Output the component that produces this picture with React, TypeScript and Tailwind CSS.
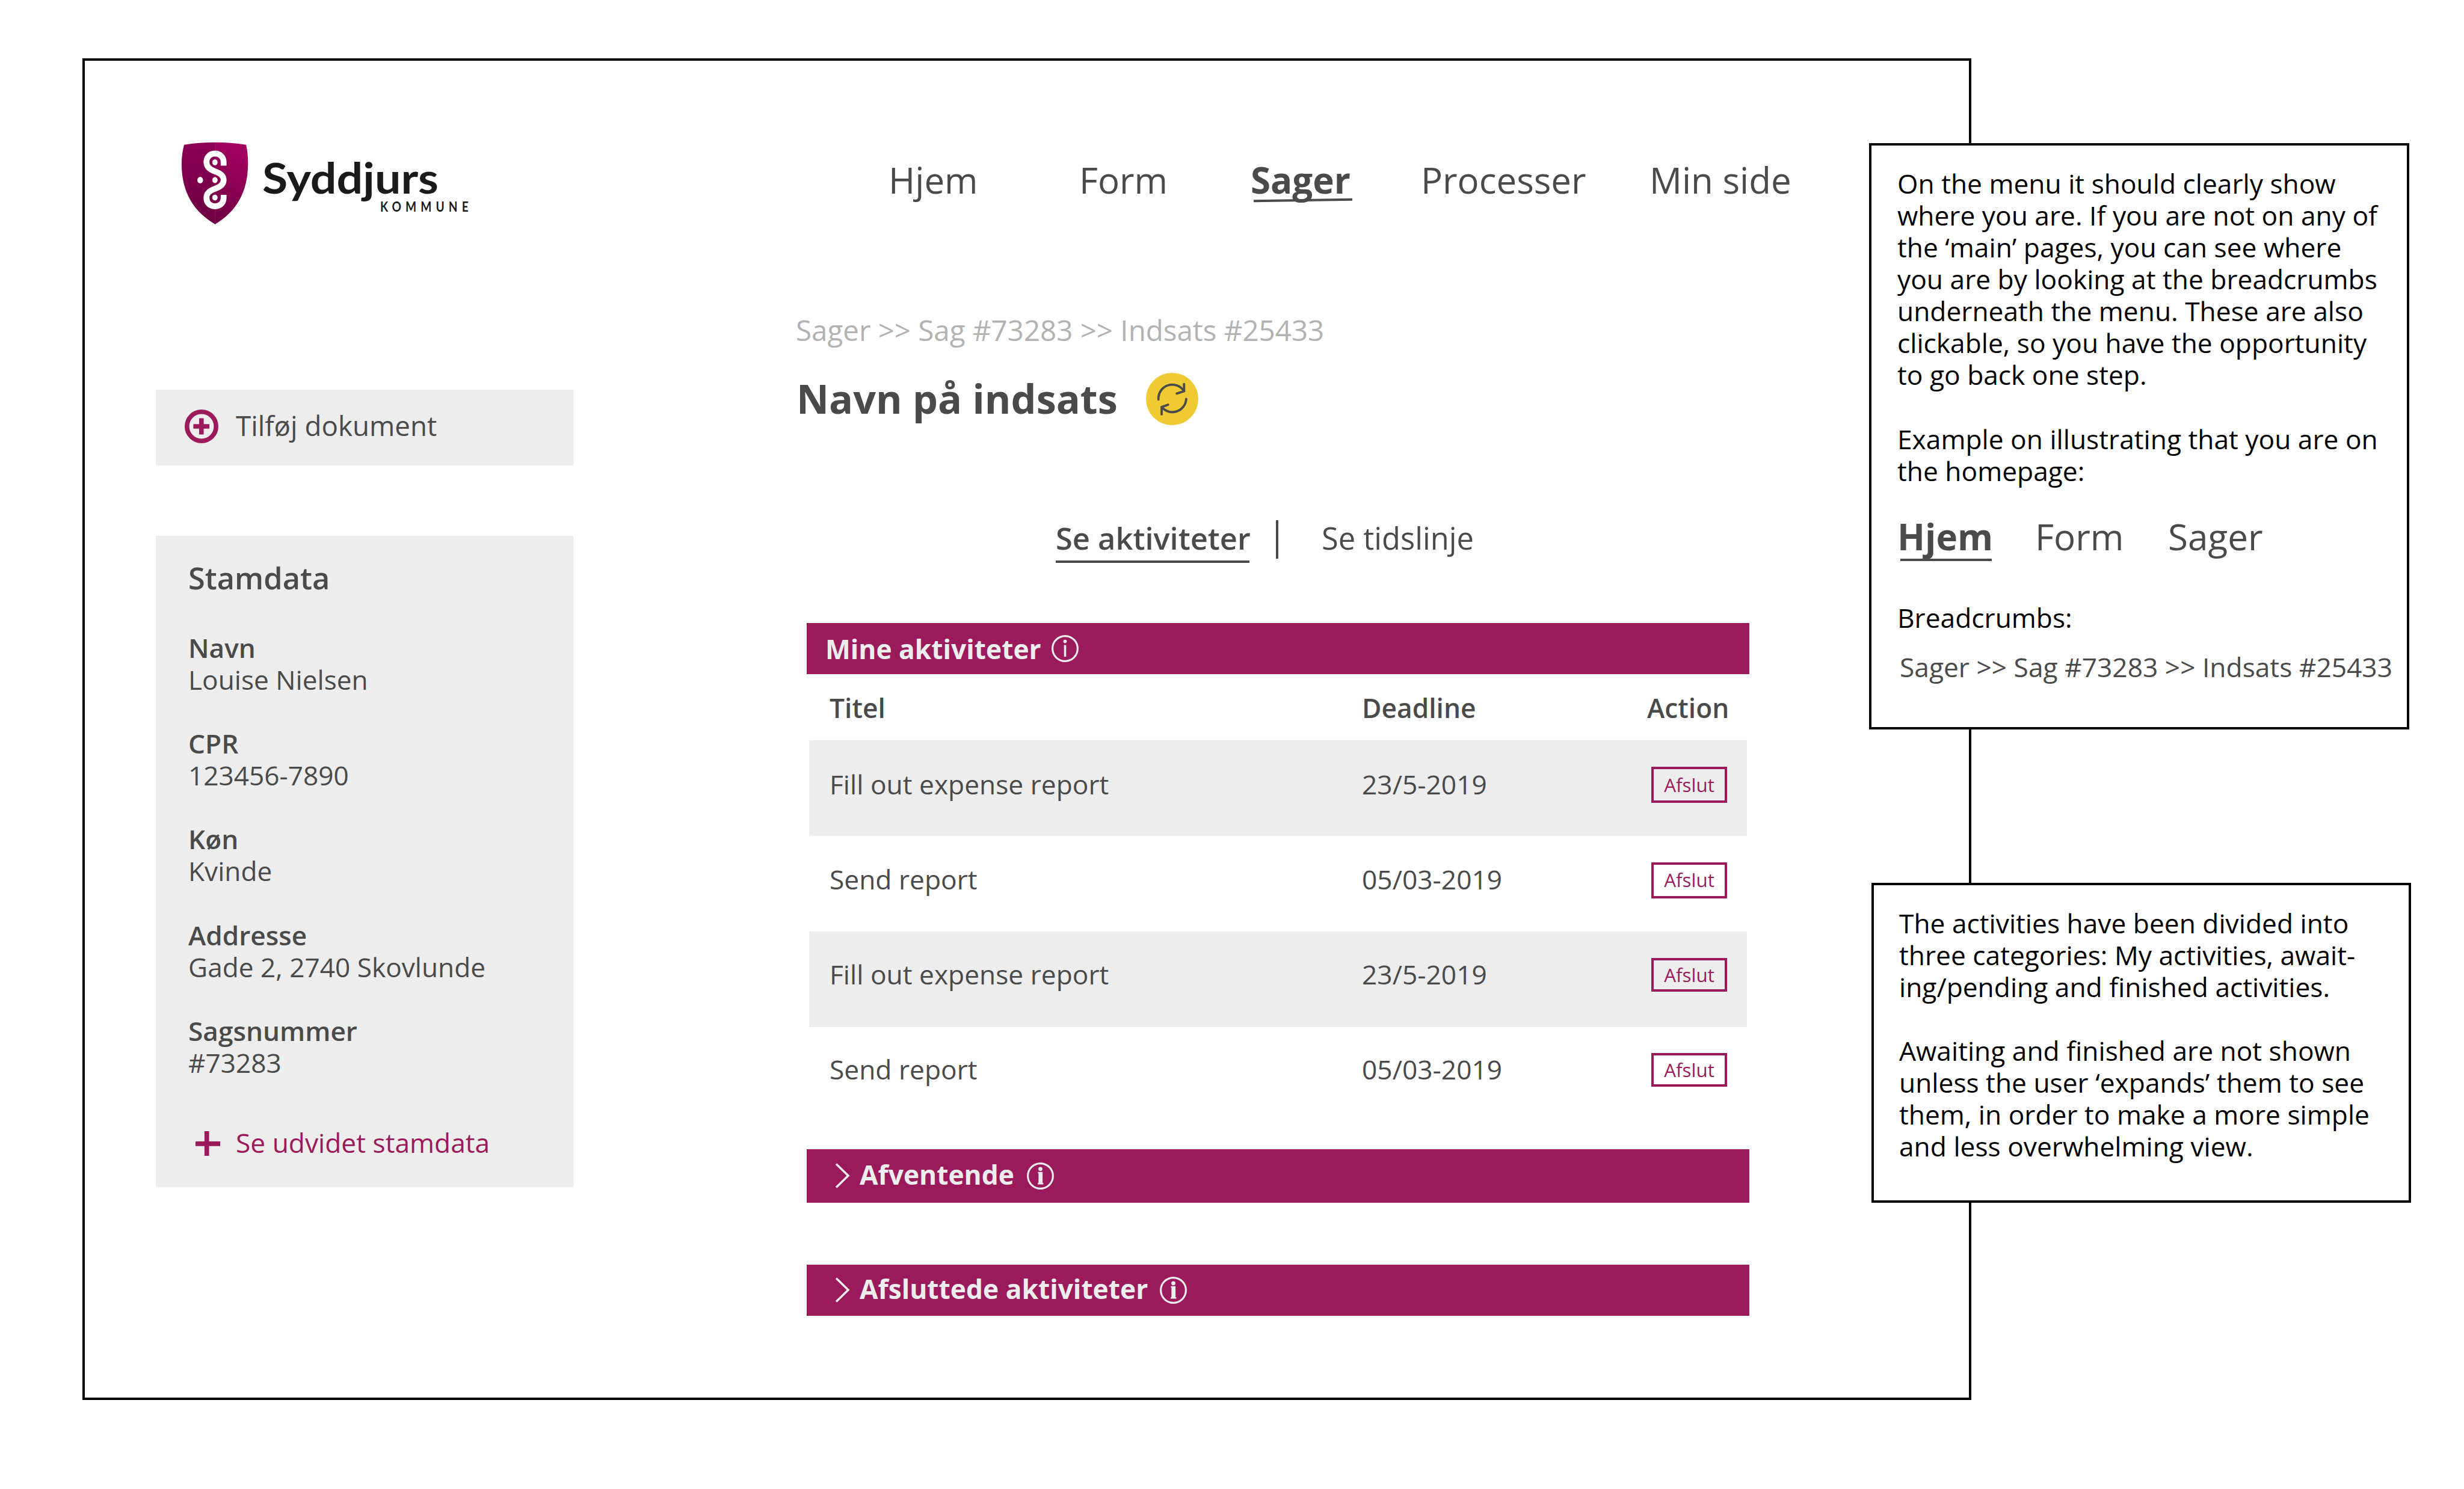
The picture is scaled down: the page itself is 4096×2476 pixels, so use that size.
import React from "react";

const stamdata = [
  { label: "Navn", value: "Louise Nielsen" },
  { label: "CPR", value: "123456-7890" },
  { label: "Køn", value: "Kvinde" },
  { label: "Addresse", value: "Gade 2, 2740 Skovlunde" },
  { label: "Sagsnummer", value: "#73283" },
];

const activities = [
  { title: "Fill out expense report", deadline: "23/5-2019", row: "bg-[#ededed]", text: "mt-[43px]", button: "mt-[44px] h-[60px]" },
  { title: "Send report", deadline: "05/03-2019", row: "", text: "mt-[42px]", button: "mt-[44px] h-[60px]" },
  { title: "Fill out expense report", deadline: "23/5-2019", row: "bg-[#ededed]", text: "mt-[41px]", button: "mt-[44px] h-[56px]" },
  { title: "Send report", deadline: "05/03-2019", row: "", text: "mt-[40px]", button: "mt-[43px] h-[56px]" },
];

function Logo() {
  return (
    <svg className="h-[138px] w-[479px] shrink-0" viewBox="340 266 540 156" role="img" aria-label="Syddjurs Kommune">
      <defs>
        <linearGradient id="shieldLeft" x1="0" y1="0" x2="0" y2="1">
          <stop offset="0" stopColor="#8c0055" />
          <stop offset="1" stopColor="#6c0040" />
        </linearGradient>
        <linearGradient id="shieldRight" x1="0.3" y1="0" x2="0.1" y2="1">
          <stop offset="0" stopColor="#a30060" />
          <stop offset="1" stopColor="#6e0042" />
        </linearGradient>
      </defs>
      <path fill="url(#shieldLeft)" d="M403.5 266.8 Q372 266.8 345 271.5 Q340 290 340.3 309 Q341 385 403.5 420.8 Z" />
      <path fill="url(#shieldRight)" d="M403 266.8 Q434 266.8 461.5 271.5 Q465.500 290 465 309 Q464 385 403 420.8 Z" />
      <path
        fill="none"
        stroke="#fff"
        strokeWidth="11"
        d="M419.200 310.700 V304 C419.200 294 412 288 403 288 C394 288 387 294 387 304 C387 313 393 318 403 321.500 C413 325 419.200 329 419.200 337.700 C419.200 346 413 350.500 403 354 C393 357.500 387 362 387 371 C387 381 394 387 403 387 C412 387 419.200 381 419.200 371 V365.500"
      />
      <g fill="#fff">
        <ellipse cx="402.900" cy="304.300" rx="5" ry="5.600" />
        <ellipse cx="375.200" cy="337.700" rx="5.400" ry="6" />
        <ellipse cx="402.900" cy="337.700" rx="5" ry="5.600" />
        <ellipse cx="402.900" cy="370.700" rx="5" ry="5.600" />
      </g>
      <g fill="#1a1a1a" style={{ fontFamily: "Lato, sans-serif" }}>
        <text x="492" y="363" fontSize="80" fontWeight="700" textLength="331" lengthAdjust="spacingAndGlyphs">Syddjurs</text>
        <text transform="translate(713.5 397.5) scale(0.85 1)" fontSize="25.500" fontWeight="700" textLength="195" lengthAdjust="spacing">KOMMUNE</text>
      </g>
    </svg>
  );
}

function InfoIcon({ bold = false }: { bold?: boolean }) {
  return (
    <svg className="h-[45px] w-[45px] shrink-0" viewBox="0 0 50 50" fill="none" stroke="#ededed">
      <circle cx="25" cy="25" r="23.200" strokeWidth="3.500" />
      {bold ? (
        <g fill="#ededed" stroke="none">
          <circle cx="25" cy="12" r="3.800" />
          <path d="M20.500 17.500 H29 V38 H30.500 V40.500 H20 V38 H21.500 V20 H20.500 Z" />
        </g>
      ) : (
        <g>
          <circle cx="25" cy="11.800" r="3.200" fill="#ededed" stroke="none" />
          <path d="M25 18.500 V40" strokeWidth="4" />
        </g>
      )}
    </svg>
  );
}

function RefreshBadge() {
  return (
    <svg className="mt-[3px] h-[87px] w-[87px]" viewBox="204 30 294 294">
      <circle cx="351" cy="177" r="147" fill="#efca33" />
      <g fill="none" stroke="#4a4a4a" strokeWidth="13" strokeLinecap="round" strokeLinejoin="round">
        <path d="M274 180 A78 78 0 0 1 418 133" />
        <path d="M418 93 V133 L377 146" />
        <path d="M430 177 A78 78 0 0 1 292 222" />
        <path d="M292 263 V222 L328 209" />
      </g>
    </svg>
  );
}

function CollapsedBar({ title, className, titleClass }: { title: string; className: string; titleClass: string }) {
  return (
    <button className={`ml-[18px] flex w-[1567px] items-center bg-[#9b1a5c] text-left text-[#ededed] ${className}`}>
      <svg className="ml-[47px] h-[42px] w-[25px]" viewBox="0 0 25 42" fill="none" stroke="#ededed" strokeWidth="3.500">
        <path d="M2 1.500 L22 21 L2 40.500" />
      </svg>
      <span className={`-mt-[4px] ml-[16px] text-[44.300px] leading-[60px] font-bold ${titleClass}`}>{title}</span>
      <InfoIcon bold />
    </button>
  );
}

export default function App() {
  return (
    <div className="relative flex h-[2476px] w-[4096px] overflow-hidden bg-white text-[#4a4a4a]" style={{ fontFamily: '"Open Sans", sans-serif' }}>
      <div className="mt-[97px] ml-[137px] h-[2231px] w-[3140px] border-4 border-black">
        <header className="flex h-[300px] items-start">
          <div className="mt-[135px] ml-[160px]">
            <Logo />
          </div>
          <nav className="mt-[158px] ml-[697px] grid grid-cols-[317px_285px_283px_380px_auto] text-[60px] leading-[80px] whitespace-nowrap">
            <a>Hjem</a>
            <a>Form</a>
            <a className="relative font-bold">
              Sager
              <span className="absolute top-[72px] left-[5px] h-[4px] w-[164px] -rotate-[0.8deg] bg-[#4a4a4a]" />
            </a>
            <a>Processer</a>
            <a>Min side</a>
          </nav>
        </header>

        <div className="flex items-start">
          <aside className="mt-[247px] ml-[118px] w-[694px]">
            <button className="flex h-[126px] w-full items-center bg-[#ededed]">
              <svg className="-mt-[4px] ml-[48px] h-[56px] w-[56px]" viewBox="0 0 62 62" fill="none" stroke="#9b1a5c" strokeWidth="8.400">
                <circle cx="31" cy="31" r="26.800" />
                <path d="M16 31 H45.500 M30.800 16 V46" />
              </svg>
              <span className="-mt-[8px] ml-[29px] text-[45.700px] leading-[60px]">Tilføj dokument</span>
            </button>

            <section className="mt-[117px] h-[1083px] bg-[#ededed] pt-[40px] pl-[54px]">
              <h2 className="text-[50.500px] leading-[60px] font-semibold">Stamdata</h2>
              <dl className="mt-[60px] flex flex-col gap-[53.070px] text-[44.200px] leading-[53.070px]">
                {stamdata.map((item) => (
                  <div key={item.label}>
                    <dt className="font-semibold">{item.label}</dt>
                    <dd>{item.value}</dd>
                  </div>
                ))}
              </dl>
              <a className="mt-[76px] flex items-center text-[44.300px] leading-[60px] text-[#9b1a5c]">
                <svg className="mt-[4px] ml-[12px] h-[41px] w-[41px]" viewBox="0 0 46 46" stroke="#9b1a5c" strokeWidth="8.600">
                  <path d="M0 23.500 H46 M21 0 V46" />
                </svg>
                <span className="ml-[26px]">Se udvidet stamdata</span>
              </a>
            </section>
          </aside>

          <main className="ml-[370px] w-[1600px] pt-[116px]">
            <p className="text-[47.500px] leading-[64px] text-[#b2b2b2]">Sager &gt;&gt; Sag #73283 &gt;&gt; Indsats #25433</p>
            <div className="mt-[36px] flex h-[90px] items-center">
              <h1 className="ml-px w-[581px] text-[66.500px] leading-[90px] font-bold whitespace-nowrap">Navn på indsats</h1>
              <RefreshBadge />
            </div>

            <div className="mt-[152px] ml-[432px] flex h-[77px] items-start text-[50.600px] leading-[71px] whitespace-nowrap">
              <a className="h-[77px] w-[322px] border-b-4 border-[#4a4a4a] font-semibold">Se aktiviteter</a>
              <span className="mt-[6px] ml-[44px] h-[64px] w-[4px] bg-[#4a4a4a]" />
              <a className="ml-[72px]">Se tidslinje</a>
            </div>

            <section className="mt-[100px]">
              <div className="ml-[18px] flex h-[85px] w-[1567px] items-center bg-[#9b1a5c] pl-[31px] text-[#ededed]">
                <h3 className="w-[376px] text-[44.300px] leading-[60px] font-bold whitespace-nowrap">Mine aktiviteter</h3>
                <InfoIcon />
              </div>
              <div className="ml-[22px] w-[1559px] text-[44.300px] leading-[60px]">
                <div className="grid h-[110px] grid-cols-[885px_474px_auto] items-center pt-[2px] pl-[34px] font-semibold">
                  <span>Titel</span>
                  <span>Deadline</span>
                  <span>Action</span>
                </div>
                {activities.map((activity, index) => (
                  <div key={index} className={`grid h-[158.900px] grid-cols-[885px_474px_auto] items-start pl-[34px] ${activity.row}`}>
                    <span className={activity.text}>{activity.title}</span>
                    <span className={activity.text}>{activity.deadline}</span>
                    <button className={`ml-[7px] w-[126px] border-4 border-[#9b1a5c] text-center text-[31.400px] leading-[50px] text-[#9b1a5c] ${activity.button}`}>
                      <span className="-mt-px block">Afslut</span>
                    </button>
                  </div>
                ))}
              </div>
            </section>

            <CollapsedBar title="Afventende" className="mt-[44px] h-[89px]" titleClass="w-[278px]" />
            <CollapsedBar title="Afsluttede aktiviteter" className="mt-[103px] h-[85px]" titleClass="w-[499px]" />
          </main>
        </div>
      </div>

      <aside className="absolute top-[238px] left-[3107px] h-[975px] w-[898px] border-4 border-black bg-white pt-[37px] pl-[43px] text-[44.300px] leading-[53.070px] whitespace-nowrap text-black">
        <p>
          On the menu it should clearly show
          <br />
          where you are. If you are not on any of
          <br />
          the ‘main’ pages, you can see where
          <br />
          you are by looking at the breadcrumbs
          <br />
          underneath the menu. These are also
          <br />
          clickable, so you have the opportunity
          <br />
          to go back one step.
        </p>
        <p className="mt-[53.070px]">
          Example on illustrating that you are on
          <br />
          the homepage:
        </p>
        <div className="mt-[47px] grid grid-cols-[229px_221px_auto] text-[60.200px] leading-[70px] text-[#4a4a4a]">
          <span className="relative font-bold">
            Hjem
            <span className="absolute top-[72px] left-[5px] h-[4px] w-[152px] bg-[#4a4a4a]" />
          </span>
          <span>Form</span>
          <span>Sager</span>
        </div>
        <p className="mt-[74px]">Breadcrumbs:</p>
        <p className="mt-[29px] ml-[4px] text-[#4a4a4a]">Sager &gt;&gt; Sag #73283 &gt;&gt; Indsats #25433</p>
      </aside>

      <aside className="absolute top-[1468px] left-[3111px] h-[532px] w-[897px] border-4 border-black bg-white pt-[37px] pl-[42px] text-[44.300px] leading-[53.070px] whitespace-nowrap text-black">
        <p>
          The activities have been divided into
          <br />
          three categories: My activities, await-
          <br />
          ing/pending and finished activities.
        </p>
        <p className="mt-[53.070px]">
          Awaiting and finished are not shown
          <br />
          unless the user ‘expands’ them to see
          <br />
          them, in order to make a more simple
          <br />
          and less overwhelming view.
        </p>
      </aside>
    </div>
  );
}
